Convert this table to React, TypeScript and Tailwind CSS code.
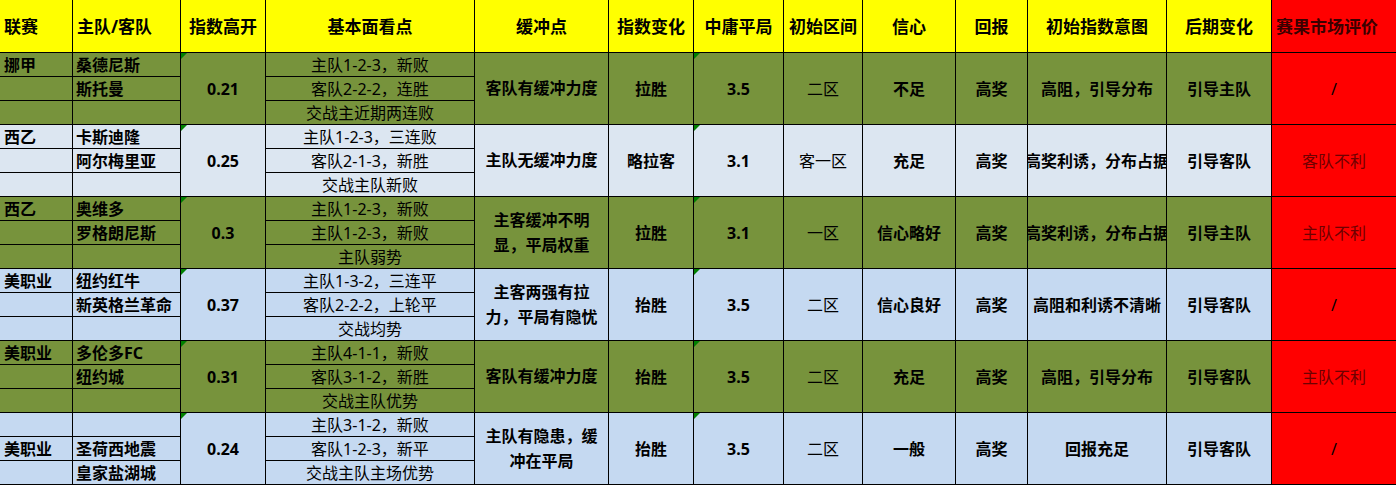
import React from "react";

type Group = {
  bg: string;
  league: string;
  leagueRow: number;
  teams: string[];
  idx: string;
  points: string[];
  buffer: string[];
  change: string;
  draw: string;
  zone: string;
  conf: string;
  ret: string;
  intent: string;
  later: string;
  market: string;
};

const GREEN = "bg-[#77933c]";
const LIGHT = "bg-[#dce6f1]";
const BLUE = "bg-[#c5d9f1]";

const groups: Group[] = [
  {
    bg: GREEN,
    league: "挪甲",
    leagueRow: 0,
    teams: ["桑德尼斯", "斯托曼", ""],
    idx: "0.21",
    points: ["主队1-2-3，新败", "客队2-2-2，连胜", "交战主近期两连败"],
    buffer: ["客队有缓冲力度"],
    change: "拉胜",
    draw: "3.5",
    zone: "二区",
    conf: "不足",
    ret: "高奖",
    intent: "高阻，引导分布",
    later: "引导主队",
    market: "/",
  },
  {
    bg: LIGHT,
    league: "西乙",
    leagueRow: 0,
    teams: ["卡斯迪隆", "阿尔梅里亚", ""],
    idx: "0.25",
    points: ["主队1-2-3，三连败", "客队2-1-3，新胜", "交战主队新败"],
    buffer: ["主队无缓冲力度"],
    change: "略拉客",
    draw: "3.1",
    zone: "客一区",
    conf: "充足",
    ret: "高奖",
    intent: "高奖利诱，分布占据",
    later: "引导客队",
    market: "客队不利",
  },
  {
    bg: GREEN,
    league: "西乙",
    leagueRow: 0,
    teams: ["奥维多", "罗格朗尼斯", ""],
    idx: "0.3",
    points: ["主队1-2-3，新败", "主队1-2-3，新败", "主队弱势"],
    buffer: ["主客缓冲不明", "显，平局权重"],
    change: "拉胜",
    draw: "3.1",
    zone: "一区",
    conf: "信心略好",
    ret: "高奖",
    intent: "高奖利诱，分布占据",
    later: "引导主队",
    market: "主队不利",
  },
  {
    bg: BLUE,
    league: "美职业",
    leagueRow: 0,
    teams: ["纽约红牛", "新英格兰革命", ""],
    idx: "0.37",
    points: ["主队1-3-2，三连平", "客队2-2-2，上轮平", "交战均势"],
    buffer: ["主客两强有拉", "力，平局有隐忧"],
    change: "抬胜",
    draw: "3.5",
    zone: "二区",
    conf: "信心良好",
    ret: "高奖",
    intent: "高阻和利诱不清晰",
    later: "引导客队",
    market: "/",
  },
  {
    bg: GREEN,
    league: "美职业",
    leagueRow: 0,
    teams: ["多伦多FC", "纽约城", ""],
    idx: "0.31",
    points: ["主队4-1-1，新败", "客队3-1-2，新胜", "交战主队优势"],
    buffer: ["客队有缓冲力度"],
    change: "抬胜",
    draw: "3.5",
    zone: "二区",
    conf: "充足",
    ret: "高奖",
    intent: "高阻，引导分布",
    later: "引导客队",
    market: "主队不利",
  },
  {
    bg: BLUE,
    league: "美职业",
    leagueRow: 1,
    teams: ["", "圣荷西地震", "皇家盐湖城"],
    idx: "0.24",
    points: ["主队3-1-2，新败", "客队1-2-3，新平", "交战主队主场优势"],
    buffer: ["主队有隐患，缓", "冲在平局"],
    change: "抬胜",
    draw: "3.5",
    zone: "二区",
    conf: "一般",
    ret: "高奖",
    intent: "回报充足",
    later: "引导客队",
    market: "/",
  },
];

const headers = [
  { t: "联赛", left: true },
  { t: "主队/客队", left: true },
  { t: "指数高开" },
  { t: "基本面看点" },
  { t: "缓冲点" },
  { t: "指数变化" },
  { t: "中庸平局" },
  { t: "初始区间" },
  { t: "信心" },
  { t: "回报" },
  { t: "初始指数意图" },
  { t: "后期变化" },
];

function Tri() {
  return (
    <div className="absolute left-0 top-0 h-[6px] w-[6px] bg-[#008000] [clip-path:polygon(0_0,100%_0,0_100%)]" />
  );
}

export default function App() {
  const cells: React.ReactNode[] = [];

  headers.forEach((h, i) => {
    cells.push(
      <div
        key={"h" + i}
        className={`flex items-center whitespace-nowrap bg-[#ffff00] text-[17px] font-bold text-black ${
          h.left ? "justify-start pl-[4px]" : "justify-center"
        }`}
      >
        {h.t}
      </div>
    );
  });
  cells.push(
    <div
      key="h12"
      className="flex items-center justify-start whitespace-nowrap bg-[#ff0000] pl-[4px] text-[17px] font-bold text-[#3a0000]"
    >
      赛果市场评价
    </div>
  );

  groups.forEach((g, gi) => {
    for (let r = 0; r < 3; r++) {
      cells.push(
        <div
          key={`g${gi}l${r}`}
          className={`flex items-center pl-[4px] font-bold text-black ${g.bg}`}
        >
          {r === g.leagueRow ? g.league : ""}
        </div>
      );
      cells.push(
        <div
          key={`g${gi}t${r}`}
          className={`flex items-center pl-[3px] font-bold text-black ${g.bg}`}
        >
          {g.teams[r]}
        </div>
      );
      if (r === 0) {
        cells.push(
          <div
            key={`g${gi}idx`}
            className={`relative row-span-3 flex items-center justify-center font-bold text-black ${g.bg}`}
          >
            <Tri />
            {g.idx}
          </div>
        );
      }
      cells.push(
        <div
          key={`g${gi}p${r}`}
          className={`flex items-center justify-center whitespace-nowrap text-black ${g.bg}`}
        >
          {g.points[r]}
        </div>
      );
      if (r === 0) {
        cells.push(
          <div
            key={`g${gi}buf`}
            className={`row-span-3 flex flex-col items-center justify-center font-bold leading-[25px] text-black ${g.bg}`}
          >
            {g.buffer.map((b, bi) => (
              <span key={bi} className="whitespace-nowrap">
                {b}
              </span>
            ))}
          </div>
        );
        cells.push(
          <div
            key={`g${gi}chg`}
            className={`row-span-3 flex items-center justify-center font-bold text-black ${g.bg}`}
          >
            {g.change}
          </div>
        );
        cells.push(
          <div
            key={`g${gi}draw`}
            className={`relative row-span-3 flex items-center justify-center font-bold text-black ${g.bg}`}
          >
            <Tri />
            {g.draw}
          </div>
        );
        cells.push(
          <div
            key={`g${gi}zone`}
            className={`row-span-3 flex items-center justify-center text-black ${g.bg}`}
          >
            {g.zone}
          </div>
        );
        cells.push(
          <div
            key={`g${gi}conf`}
            className={`row-span-3 flex items-center justify-center font-bold text-black ${g.bg}`}
          >
            {g.conf}
          </div>
        );
        cells.push(
          <div
            key={`g${gi}ret`}
            className={`row-span-3 flex items-center justify-center font-bold text-black ${g.bg}`}
          >
            {g.ret}
          </div>
        );
        cells.push(
          <div
            key={`g${gi}int`}
            className={`row-span-3 flex items-center justify-center overflow-hidden whitespace-nowrap font-bold text-black ${g.bg}`}
          >
            <span className="shrink-0">{g.intent}</span>
          </div>
        );
        cells.push(
          <div
            key={`g${gi}later`}
            className={`row-span-3 flex items-center justify-center font-bold text-black ${g.bg}`}
          >
            {g.later}
          </div>
        );
        cells.push(
          <div
            key={`g${gi}mkt`}
            className={`row-span-3 flex items-center justify-center bg-[#ff0000] ${
              g.market === "/" ? "text-black" : "text-[#6e0000]"
            }`}
          >
            {g.market}
          </div>
        );
      }
    }
  });

  return (
    <div className="h-[485px] w-[1396px] overflow-hidden bg-white">
      <div
        className="grid w-[1396px] grid-cols-[72px_107px_84px_208px_133px_84px_89px_78px_92px_71px_138px_104px_124px] grid-rows-[52px_repeat(18,23px)] gap-px bg-black pb-px text-[16px] leading-none"
        style={{
          fontFamily: '"Noto Sans", "Noto Sans CJK SC", sans-serif',
        }}
      >
        {cells}
      </div>
    </div>
  );
}
